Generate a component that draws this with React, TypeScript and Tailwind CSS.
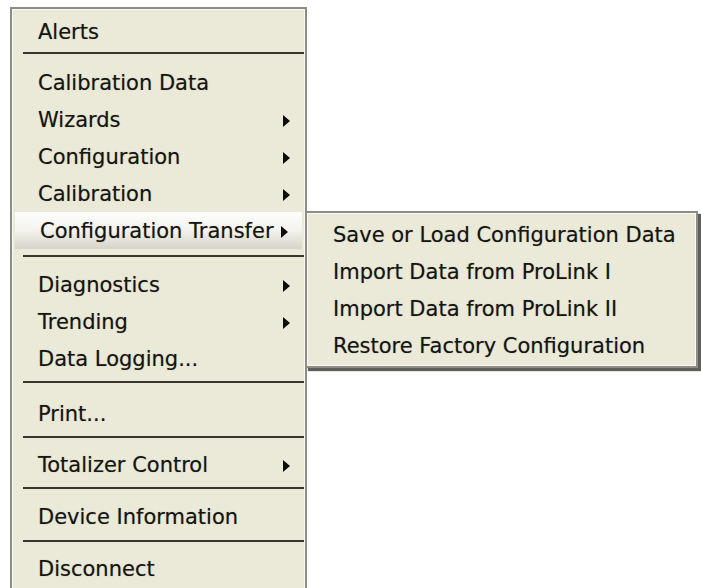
import React from 'react';

type Item = { label: string; sub?: boolean; active?: boolean };
type Group = { items: Item[]; sep?: string };

// each group ends with a separator; margins tuned to the screenshot
const groups: Group[] = [
  { items: [{ label: 'Alerts' }], sep: 'mt-[2px] mb-[10px]' },
  {
    items: [
      { label: 'Calibration Data' },
      { label: 'Wizards', sub: true },
      { label: 'Configuration', sub: true },
      { label: 'Calibration', sub: true },
      { label: 'Configuration Transfer', sub: true, active: true },
    ],
    sep: 'mt-[6px] mb-[9px]',
  },
  {
    items: [
      { label: 'Diagnostics', sub: true },
      { label: 'Trending', sub: true },
      { label: 'Data Logging...' },
    ],
    sep: 'mt-[4px] mb-[12px]',
  },
  { items: [{ label: 'Print...' }], sep: 'mt-[4px] mb-[8px]' },
  { items: [{ label: 'Totalizer Control', sub: true }], sep: 'mt-[4px] mb-[9px]' },
  { items: [{ label: 'Device Information' }], sep: 'mt-[5px] mb-[8px]' },
  { items: [{ label: 'Disconnect' }] },
];

const subItems = [
  'Save or Load Configuration Data',
  'Import Data from ProLink I',
  'Import Data from ProLink II',
  'Restore Factory Configuration',
];

const Arrow = () => (
  <span className="w-0 h-0 border-y-[6px] border-y-transparent border-l-[7px] border-l-[#0c0c0a]" />
);

const MenuRow = ({ item }: { item: Item }) => (
  <div
    className={`h-[37px] pt-[3px] flex items-center justify-between pl-[25px] pr-[14px] ${
      item.active ? 'mx-[2px] pl-[23px] pr-[12px] bg-linear-to-b from-[#fefefc] via-[#f3f2ec] to-[#d6d4c8]' : ''
    }`}
  >
    <span className="whitespace-nowrap">{item.label}</span>
    {item.sub && <Arrow />}
  </div>
);

export default function App() {
  return (
    <div
      className="relative w-[701px] h-[588px] bg-white overflow-hidden text-[21px] text-[#151512] [text-shadow:0_0_1px_rgba(0,0,0,0.35)]"
      style={{ fontFamily: '"DejaVu Sans", Verdana, sans-serif' }}
    >
      <div className="ml-[10px] mt-[7px] w-[297px] border-2 border-[#8e8d85] bg-[#ebe9d7]">
        <div className="border border-[#fbfaf2] pt-[3px] pb-[3px]">
          {groups.map((g, gi) => (
            <div key={gi}>
              {g.items.map((it) => (
                <MenuRow key={it.label} item={it} />
              ))}
              {g.sep && <div className={`ml-[10px] h-[2px] bg-[#38372f] ${g.sep}`} />}
            </div>
          ))}
        </div>
      </div>

      {/* flyout submenu */}
      <div className="absolute left-[305px] top-[211px] w-[393px] border-2 border-[#8e8d85] bg-[#ebe9d7] shadow-[3px_3px_1px_rgba(40,40,36,0.75)]">
        <div className="border border-[#fbfaf2] pt-[2px] pb-[1px]">
          {subItems.map((s) => (
            <div key={s} className="h-[37px] pt-[3px] flex items-center pl-[25px] whitespace-nowrap">
              {s}
            </div>
          ))}
        </div>
      </div>
    </div>
  );
}
